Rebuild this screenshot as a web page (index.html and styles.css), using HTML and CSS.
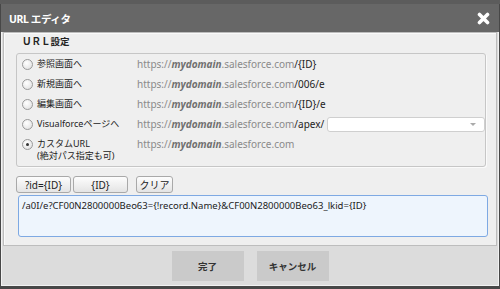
FILE: index.html
```html
<!DOCTYPE html>
<html lang="ja">
<head>
    <meta charset="UTF-8">
    <meta name="viewport" content="width=device-width, initial-scale=1.0">
    <link rel="stylesheet" href="styles.css">
    <title>URL エディタ</title>
</head>
<body>
    <div class="backdrop"></div>

    <section class="dialog">

        <div class="titlebar">
            <span class="title">URL エディタ</span>
            <svg class="close" width="13" height="13" viewBox="0 0 13 13">
                <path d="M2.5 2.5 L10.5 10.5 M10.5 2.5 L2.5 10.5" stroke="#fff" stroke-width="3.6" stroke-linecap="round"/>
            </svg>
        </div>

        <div class="panel">
            <div class="legend">ＵＲＬ設定</div>

            <div class="group">
                <label class="row">
                    <span class="choice"><span class="radio"></span>参照画面へ</span>
                    <span class="url">https://<b>mydomain</b>.salesforce.com<span class="path">/{ID}</span></span>
                </label>
                <label class="row">
                    <span class="choice"><span class="radio"></span>新規画面へ</span>
                    <span class="url">https://<b>mydomain</b>.salesforce.com<span class="path">/006/e</span></span>
                </label>
                <label class="row">
                    <span class="choice"><span class="radio"></span>編集画面へ</span>
                    <span class="url">https://<b>mydomain</b>.salesforce.com<span class="path">/{ID}/e</span></span>
                </label>
                <label class="row">
                    <span class="choice"><span class="radio"></span>Visualforceページへ</span>
                    <span class="url">https://<b>mydomain</b>.salesforce.com<span class="path">/apex/</span></span>
                    <span class="select"><span class="arrow"></span></span>
                </label>
                <label class="row custom">
                    <span class="choice"><span class="radio checked"></span><span>カスタムURL<br>(絶対パス指定も可)</span></span>
                    <span class="url">https://<b>mydomain</b>.salesforce.com</span>
                </label>
            </div>

            <div class="tools">
                <button class="tool wide">?id={ID}</button>
                <button class="tool wide">{ID}</button>
                <button class="tool clear">クリア</button>
            </div>

            <div class="editor">/a0I/e?CF00N2800000Beo63={!record.Name}&amp;CF00N2800000Beo63_lkid={ID}</div>
        </div>

        <div class="footer">
            <button class="action">完了</button>
            <button class="action">キャンセル</button>
        </div>

    </section>
</body>
</html>
```

FILE: styles.css
```css
* {
    box-sizing: border-box;
    font-family: "Noto Sans", "Noto Sans CJK JP", sans-serif;
}

html, body {
    margin: 0;
    padding: 0;

    width: 500px;
    height: 289px;
    overflow: hidden;

    background-color: #474747;
}

.backdrop {
    height: 4px;

    background-color: #5c5c5c;
}

.dialog {
    width: 498px;
    margin-left: 1px;

    background-color: #dcdcdc;

    border-left: 1px solid #f2f2f2;
    border-right: 1px solid #f2f2f2;
    border-bottom: 1px solid #f2f2f2;
}

.titlebar {
    height: 28px;
    margin: 0 -1px;
    padding: 0 9px 0 8px;

    display: flex;
    justify-content: space-between;
    align-items: center;

    background-color: #676767;
}

.title {
    font-size: 10.5px;
    font-weight: bold;
    letter-spacing: -0.4px;
    color: white;
}

/*

    URL SETTINGS

*/

.panel {
    margin: 0 1px;
    padding: 2px 10px 8px 12px;

    background-color: #efefef;

    border: 1px solid #bdbdbd;
    box-shadow: inset 1px 1px 0 #fafafa;
}

.legend {
    height: 14px;
    margin-bottom: 4px;
    padding-left: 6px;

    font-size: 9.5px;
    font-weight: bold;
    line-height: 14px;
    color: #222;
}

.group {
    padding: 0 0 4px 5px;

    border: 1px solid #c6c6c6;
    border-radius: 3px;

    box-shadow: 1px 1px 0 #fafafa;
}

.row {
    height: 20px;

    display: flex;
    align-items: center;

    font-size: 9px;
    color: #222;
}

.row.custom {
    height: 28px;
    padding-top: 4px;
    align-items: flex-start;
}

.choice {
    width: 115px;
    flex: none;

    display: flex;
    align-items: center;
    gap: 4px;

    line-height: 12px;
    white-space: nowrap;
}

.row.custom .choice {
    align-items: flex-start;
}

.row.custom .radio {
    margin-top: 1px;
}

.radio {
    width: 11px;
    height: 11px;
    flex: none;

    border: 1px solid #9a9a9a;
    border-radius: 50%;

    background: radial-gradient(circle at 40% 35%, #ffffff 0%, #e6e6e6 70%, #d2d2d2 100%);

    display: flex;
    justify-content: center;
    align-items: center;
}

.radio.checked::after {
    content: "";

    width: 3px;
    height: 3px;

    border-radius: 50%;

    background-color: #333;
}

.url {
    font-size: 10px;
    line-height: 12px;
    color: #8a8a8a;
    white-space: nowrap;
}

.url b {
    font-weight: bold;
    font-style: italic;
    color: #6f6f6f;
}

.path {
    color: #222;
}

.select {
    width: 160px;
    height: 15px;
    margin-left: 3px;

    display: flex;
    justify-content: flex-end;
    align-items: center;

    background-color: white;

    border: 1px solid #cfcfcf;
    border-radius: 3px;
}

.arrow {
    width: 0;
    height: 0;
    margin-right: 8px;

    border-left: 3px solid transparent;
    border-right: 3px solid transparent;
    border-top: 3px solid #aaa;
}

/*

    EDITOR

*/

.tools {
    margin-top: 9px;

    display: flex;
    gap: 2px;
}

.tool {
    height: 17px;
    padding: 0;

    font-size: 10px;
    color: #222;

    background: linear-gradient(#fdfdfd, #e4e4e4);

    border: 1px solid #a9a9a9;
    border-radius: 3px;
}

.tool.wide {
    width: 55px;
}

.tool.clear {
    width: 37px;
    margin-left: 6px;
}

.editor {
    width: 470px;
    height: 42px;
    margin-top: 2px;
    margin-left: 2px;
    padding: 3px 3px;

    font-size: 9.5px;
    line-height: 14px;
    color: #222;

    background-color: #eef5fd;

    border: 1px solid #7ea9e3;
    border-radius: 3px;
}

/*

    FOOTER

*/

.footer {
    height: 39px;
    padding-top: 5px;

    display: flex;
    justify-content: center;
    gap: 13px;
}

.action {
    width: 72px;
    height: 30px;

    font-size: 9.5px;
    font-weight: bold;
    color: #333;

    background-color: #cacaca;

    border: none;
}
```
